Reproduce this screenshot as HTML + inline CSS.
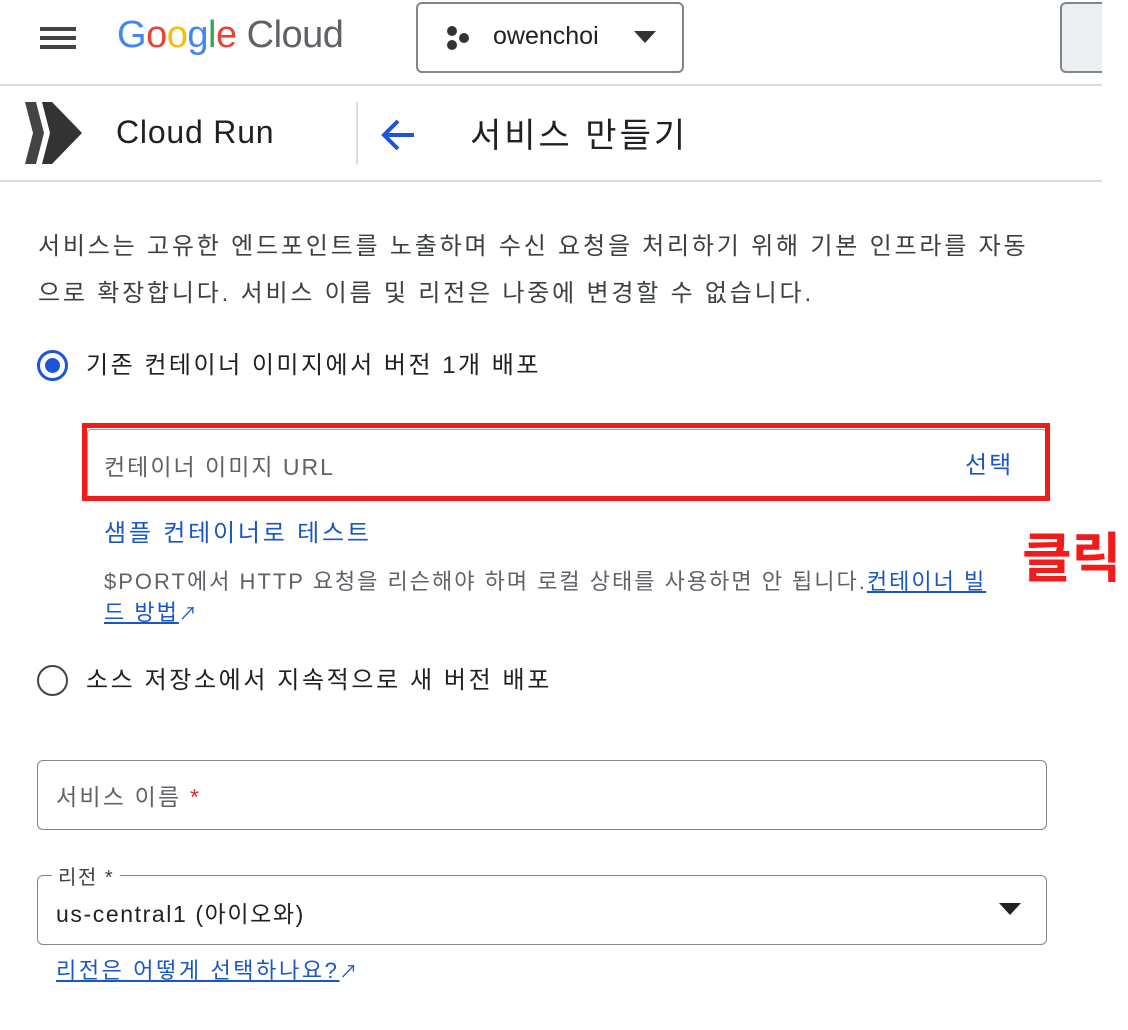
<!DOCTYPE html>
<html><head><meta charset="utf-8"><style>
*{margin:0;padding:0;box-sizing:border-box}
body{width:1128px;height:1030px;background:#fff;position:relative;overflow:hidden;font-family:"Liberation Sans","Noto Sans CJK KR",sans-serif;color:#202124}
.a{position:absolute;white-space:nowrap}
.k{font-family:"Liberation Sans","Noto Sans CJK KR",sans-serif}
.link{color:#1a56c4}
</style></head><body>
<div class="a" style="left:40px;top:27px;width:36px;height:4px;background:#444;box-shadow:0 9px 0 #444,0 18px 0 #444"></div>
<div class="a" style="left:117px;top:14px;font-size:38px;letter-spacing:-0.5px"><span style="color:#4285f4">G</span><span style="color:#ea4335">o</span><span style="color:#fbbc05">o</span><span style="color:#4285f4">g</span><span style="color:#34a853">l</span><span style="color:#ea4335">e</span><span style="color:#5f6368"> Cloud</span></div>
<div class="a" style="left:416px;top:2px;width:268px;height:71px;border:2px solid #80868b;border-radius:6px"></div>
<svg class="a" style="left:444px;top:25px" width="28" height="26"><circle cx="8" cy="6" r="5" fill="#333"/><circle cx="8" cy="20" r="5" fill="#333"/><circle cx="20" cy="13" r="5" fill="#333"/></svg>
<div class="a" style="left:493px;top:22px;font-size:25px;color:#202124">owenchoi</div>
<svg class="a" style="left:634px;top:31px" width="22" height="12"><path d="M0 0h22L11 12z" fill="#333"/></svg>
<div class="a" style="left:1060px;top:2px;width:60px;height:71px;border:2px solid #80868b;border-radius:6px;background:#eceff1"></div>
<div class="a" style="left:1102px;top:0;width:26px;height:200px;background:#fff"></div>
<div class="a" style="left:0;top:84px;width:1102px;height:2px;background:#dadce0"></div>
<svg class="a" style="left:22px;top:102px" width="62" height="62"><path d="M3 0 L14 0 L22 31 L14 62 L3 62 L11 31Z" fill="#444"/><path d="M20 0 L30 0 L60 31 L30 62 L20 62 L28 31Z" fill="#333"/></svg>
<div class="a" style="left:116px;top:114px;font-size:32px;letter-spacing:0.8px;color:#202124">Cloud Run</div>
<div class="a" style="left:356px;top:102px;width:2px;height:62px;background:#dadce0"></div>
<svg class="a" style="left:380px;top:118px" width="36" height="34"><path d="M34 17H4M18 3L4 17l14 14" stroke="#1a56d6" stroke-width="4" fill="none"/></svg>
<div class="a k" style="left:470px;top:108px;font-size:34px;letter-spacing:3px;color:#202124">서비스 만들기</div>
<div class="a" style="left:0;top:180px;width:1102px;height:2px;background:#dadce0"></div>
<div class="a k" style="left:38px;top:223px;font-size:24px;letter-spacing:2.8px;line-height:47px;color:#3c4043">서비스는 고유한 엔드포인트를 노출하며 수신 요청을 처리하기 위해 기본 인프라를 자동<br>으로 확장합니다. 서비스 이름 및 리전은 나중에 변경할 수 없습니다.</div>
<div class="a" style="left:37px;top:350px;width:31px;height:31px;border:3px solid #1a56d6;border-radius:50%"></div>
<div class="a" style="left:45px;top:358px;width:15px;height:15px;background:#1a56d6;border-radius:50%"></div>
<div class="a k" style="left:86px;top:345px;font-size:24px;letter-spacing:2.5px">기존 컨테이너 이미지에서 버전 1개 배포</div>
<div class="a" style="left:87px;top:429px;width:960px;height:69px;border:1px solid #9aa0a6;border-radius:4px"></div>
<div class="a" style="left:82px;top:423px;width:968px;height:78px;border:5px solid #f21b1b"></div>
<div class="a k" style="left:104px;top:448px;font-size:23px;letter-spacing:2px;color:#5f6368">컨테이너 이미지 URL</div>
<div class="a k link" style="left:965px;top:445px;font-size:24px;letter-spacing:2px">선택</div>
<div class="a k link" style="left:104px;top:513px;font-size:24px;letter-spacing:2.8px">샘플 컨테이너로 테스트</div>
<div class="a k" style="left:1022px;top:514px;font-size:54px;font-weight:bold;color:#f21b1b">클릭</div>
<div class="a k" style="left:104px;top:564px;font-size:22px;letter-spacing:2px;color:#5f6368">$PORT에서 HTTP 요청을 리슨해야 하며 로컬 상태를 사용하면 안 됩니다.<span class="link" style="text-decoration:underline">컨테이너 빌</span></div>
<div class="a k link" style="left:104px;top:595px;font-size:22px;letter-spacing:2px"><span style="text-decoration:underline">드 방법</span><span style="font-size:18px">↗</span></div>
<div class="a" style="left:37px;top:665px;width:31px;height:31px;border:2px solid #444;border-radius:50%"></div>
<div class="a k" style="left:86px;top:660px;font-size:24px;letter-spacing:2.6px">소스 저장소에서 지속적으로 새 버전 배포</div>
<div class="a" style="left:37px;top:760px;width:1010px;height:70px;border:1px solid #80868b;border-radius:6px"></div>
<div class="a k" style="left:56px;top:778px;font-size:23px;letter-spacing:2.2px;color:#5f6368">서비스 이름 <span style="color:#d93025">*</span></div>
<div class="a" style="left:37px;top:875px;width:1010px;height:70px;border:1px solid #80868b;border-radius:6px"></div>
<div class="a k" style="left:52px;top:861px;font-size:20px;letter-spacing:1.5px;background:#fff;padding:0 6px;color:#3c4043">리전 *</div>
<div class="a k" style="left:56px;top:895px;font-size:23px;letter-spacing:1.6px;color:#202124">us-central1 (아이오와)</div>
<svg class="a" style="left:999px;top:903px" width="22" height="12"><path d="M0 0h22L11 12z" fill="#222"/></svg>
<div class="a k link" style="left:56px;top:953px;font-size:22px;letter-spacing:2.6px"><span style="text-decoration:underline">리전은 어떻게 선택하나요?</span><span style="font-size:18px">↗</span></div>
</body></html>
